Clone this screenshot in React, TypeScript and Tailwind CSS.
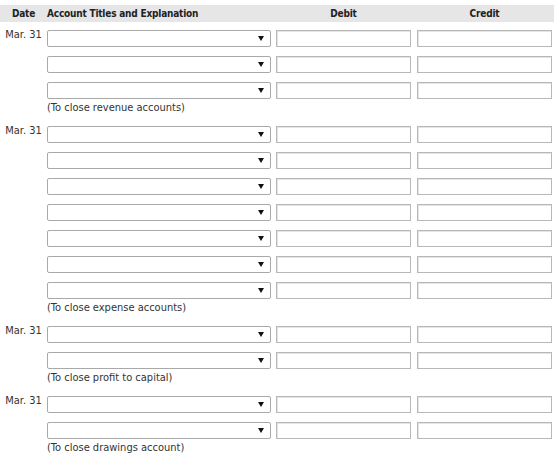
const groups = [
  { rows: 3, note: '(To close revenue accounts)' },
  { rows: 7, note: '(To close expense accounts)' },
  { rows: 2, note: '(To close profit to capital)' },
  { rows: 2, note: '(To close drawings account)' },
];

function SelectBox() {
  return (
    <div className="relative h-[17px] w-[224px] rounded-[2px] border border-[#a9a9a9] bg-white">
      <span className="absolute right-[6px] top-[5px] h-0 w-0 border-x-[3px] border-t-[5px] border-x-transparent border-t-[#111]" />
    </div>
  );
}

function AmountBox() {
  return <div className="h-[17px] w-[135px] border border-[#b8b8b8] bg-white shadow-[inset_1px_1px_0_#e4e4e4]" />;
}

export default function App() {
  return (
    <div
      className="h-[470px] w-[560px] bg-white pt-[5px] text-[11px] text-[#333]"
      style={{ fontFamily: '"DejaVu Sans Condensed", "DejaVu Sans", sans-serif' }}
    >
      {/* Header */}
      <div className="flex h-[17px] w-[554px] items-center bg-[#e6e6e6] text-[10px] font-bold tracking-[-0.2px] text-[#222]">
        <div className="w-[47px] text-center">Date</div>
        <div className="w-[229px]">Account Titles and Explanation</div>
        <div className="w-[141px] pr-[6px] text-center">Debit</div>
        <div className="w-[135px] text-center">Credit</div>
      </div>

      <div className="mt-[5px] flex flex-col gap-[7px]">
        {groups.map((g, gi) => (
          <div key={gi} className="flex items-start">
            <div className="w-[47px] text-center leading-[16px]">Mar. 31</div>
            <div className="flex flex-col pt-[3px]">
              <div className="flex flex-col gap-[9px]">
                {Array.from({ length: g.rows }).map((_, ri) => (
                  <div key={ri} className="flex items-center">
                    <SelectBox />
                    <div className="ml-[5px]">
                      <AmountBox />
                    </div>
                    <div className="ml-[6px]">
                      <AmountBox />
                    </div>
                  </div>
                ))}
              </div>
              <div className="mt-[1px] leading-[16px]">{g.note}</div>
            </div>
          </div>
        ))}
      </div>
    </div>
  );
}
